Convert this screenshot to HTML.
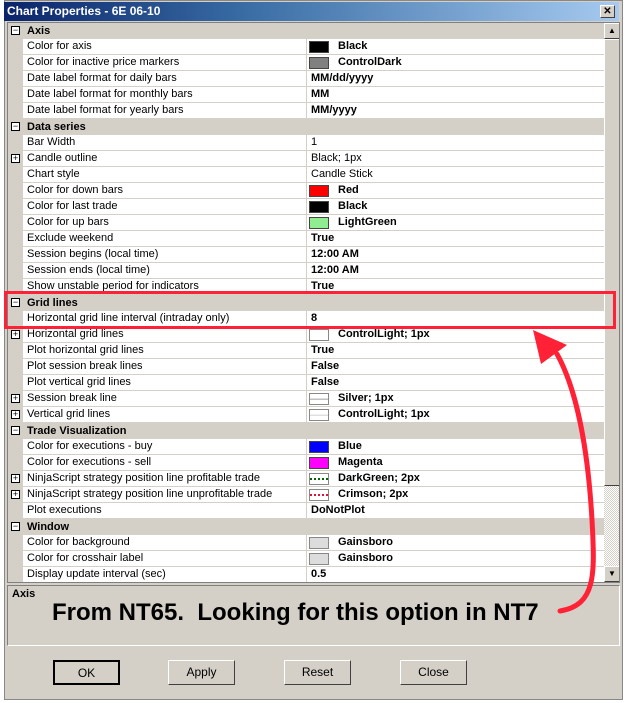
<!DOCTYPE html>
<html><head><meta charset="utf-8"><style>
*{margin:0;padding:0;box-sizing:border-box}
body{width:627px;height:703px;overflow:hidden;background:#fff;font-family:"Liberation Sans",Arial,sans-serif;font-size:11px;color:#000;position:relative}
.win{position:absolute;left:4px;top:0;width:619px;height:700px;background:#d4d0c8;border:1px solid #888}
.title{position:absolute;left:4px;top:2px;width:615px;height:19px;background:linear-gradient(90deg,#0a246a,#3a6ea5 40%,#a6caf0);color:#fff;font-weight:bold;font-size:12px;line-height:19px;padding-left:3px}
.xb{position:absolute;right:4px;top:3px;width:15px;height:13px;background:#d4d0c8;border:1px solid;border-color:#fff #404040 #404040 #fff;font-size:10px;line-height:11px;text-align:center;color:#000}
.grid{position:absolute;left:7px;top:22px;width:613px;height:561px;border:1px solid #808080;background:#d4d0c8;overflow:hidden}
.r{position:absolute;left:0;height:16px;width:596px}
.r .n{position:absolute;left:15px;width:283px;height:15px;background:#fff;padding-left:4px;line-height:15px;white-space:nowrap;overflow:hidden}
.r .v{position:absolute;left:299px;width:297px;height:15px;background:#fff;padding-left:4px;line-height:15px;white-space:nowrap}
.r .ln{position:absolute;left:15px;top:15px;width:581px;height:1px;background:#d4d0c8}
.h{position:absolute;left:0;height:16px;width:596px;background:#d4d0c8;font-weight:bold;line-height:16px;padding-left:19px}
.pm{position:absolute;left:3px;top:3px;width:9px;height:9px;border:1px solid #000;background:#fff;font-size:9px;line-height:7px;text-align:center;font-weight:normal}
b{font-weight:bold}
.sw{position:absolute;left:2px;top:2px;width:20px;height:12px;border:1px solid #444}
.sv{position:absolute;left:31px;top:0;line-height:15px}
.sb{position:absolute;left:596px;top:0;width:16px;height:559px;background:repeating-conic-gradient(#d4d0c8 0 25%,#fff 0 50%) 0 0/2px 2px}
.btn3{position:absolute;background:#d4d0c8;border:1px solid;border-color:#fff #404040 #404040 #fff}
.desc{position:absolute;left:7px;top:585px;width:613px;height:61px;border:1px solid #808080;border-right-color:#fff;border-bottom-color:#fff}
.b{position:absolute;top:660px;width:67px;height:25px;border:1px solid;border-color:#fff #404040 #404040 #fff;background:#d4d0c8;text-align:center;line-height:23px;font-size:12px}
</style></head><body>
<div class="win"></div>
<div class="title">Chart Properties - 6E 06-10<div class="xb">✕</div></div>
<div class="grid">
<div class="h" style="top:0"><span class="pm">−</span>Axis</div>
<div class="r" style="top:16px"><div class="n">Color for axis</div><div class="v"><span class="sw" style="background:#000"></span><b class="sv">Black</b></div><div class="ln"></div></div>
<div class="r" style="top:32px"><div class="n">Color for inactive price markers</div><div class="v"><span class="sw" style="background:#808080"></span><b class="sv">ControlDark</b></div><div class="ln"></div></div>
<div class="r" style="top:48px"><div class="n">Date label format for daily bars</div><div class="v"><b>MM/dd/yyyy</b></div><div class="ln"></div></div>
<div class="r" style="top:64px"><div class="n">Date label format for monthly bars</div><div class="v"><b>MM</b></div><div class="ln"></div></div>
<div class="r" style="top:80px"><div class="n">Date label format for yearly bars</div><div class="v"><b>MM/yyyy</b></div><div class="ln"></div></div>
<div class="h" style="top:96px"><span class="pm">−</span>Data series</div>
<div class="r" style="top:112px"><div class="n">Bar Width</div><div class="v">1</div><div class="ln"></div></div>
<div class="r" style="top:128px"><span class="pm">+</span><div class="n">Candle outline</div><div class="v">Black; 1px</div><div class="ln"></div></div>
<div class="r" style="top:144px"><div class="n">Chart style</div><div class="v">Candle Stick</div><div class="ln"></div></div>
<div class="r" style="top:160px"><div class="n">Color for down bars</div><div class="v"><span class="sw" style="background:#f00"></span><b class="sv">Red</b></div><div class="ln"></div></div>
<div class="r" style="top:176px"><div class="n">Color for last trade</div><div class="v"><span class="sw" style="background:#000"></span><b class="sv">Black</b></div><div class="ln"></div></div>
<div class="r" style="top:192px"><div class="n">Color for up bars</div><div class="v"><span class="sw" style="background:#90ee90"></span><b class="sv">LightGreen</b></div><div class="ln"></div></div>
<div class="r" style="top:208px"><div class="n">Exclude weekend</div><div class="v"><b>True</b></div><div class="ln"></div></div>
<div class="r" style="top:224px"><div class="n">Session begins (local time)</div><div class="v"><b>12:00 AM</b></div><div class="ln"></div></div>
<div class="r" style="top:240px"><div class="n">Session ends (local time)</div><div class="v"><b>12:00 AM</b></div><div class="ln"></div></div>
<div class="r" style="top:256px"><div class="n">Show unstable period for indicators</div><div class="v"><b>True</b></div><div class="ln"></div></div>
<div class="h" style="top:272px"><span class="pm">−</span>Grid lines</div>
<div class="r" style="top:288px"><div class="n">Horizontal grid line interval (intraday only)</div><div class="v"><b>8</b></div><div class="ln"></div></div>
<div class="r" style="top:304px"><span class="pm">+</span><div class="n">Horizontal grid lines</div><div class="v"><span class="sw" style="background:#fff;border-color:#888"></span><b class="sv">ControlLight; 1px</b></div><div class="ln"></div></div>
<div class="r" style="top:320px"><div class="n">Plot horizontal grid lines</div><div class="v"><b>True</b></div><div class="ln"></div></div>
<div class="r" style="top:336px"><div class="n">Plot session break lines</div><div class="v"><b>False</b></div><div class="ln"></div></div>
<div class="r" style="top:352px"><div class="n">Plot vertical grid lines</div><div class="v"><b>False</b></div><div class="ln"></div></div>
<div class="r" style="top:368px"><span class="pm">+</span><div class="n">Session break line</div><div class="v"><span class="sw" style="background:linear-gradient(#fff 45%,#c0c0c0 45% 60%,#fff 60%);border-color:#888"></span><b class="sv">Silver; 1px</b></div><div class="ln"></div></div>
<div class="r" style="top:384px"><span class="pm">+</span><div class="n">Vertical grid lines</div><div class="v"><span class="sw" style="background:linear-gradient(#fff 45%,#e0e0e0 45% 60%,#fff 60%);border-color:#888"></span><b class="sv">ControlLight; 1px</b></div><div class="ln"></div></div>
<div class="h" style="top:400px"><span class="pm">−</span>Trade Visualization</div>
<div class="r" style="top:416px"><div class="n">Color for executions - buy</div><div class="v"><span class="sw" style="background:#00f"></span><b class="sv">Blue</b></div><div class="ln"></div></div>
<div class="r" style="top:432px"><div class="n">Color for executions - sell</div><div class="v"><span class="sw" style="background:#f0f"></span><b class="sv">Magenta</b></div><div class="ln"></div></div>
<div class="r" style="top:448px"><span class="pm">+</span><div class="n">NinjaScript strategy position line profitable trade</div><div class="v"><span class="sw" style="background:linear-gradient(#fff 40%,transparent 40% 60%,#fff 60%),repeating-linear-gradient(90deg,#006400 0 2px,#fff 2px 4px);border-color:#888"></span><b class="sv">DarkGreen; 2px</b></div><div class="ln"></div></div>
<div class="r" style="top:464px"><span class="pm">+</span><div class="n">NinjaScript strategy position line unprofitable trade</div><div class="v"><span class="sw" style="background:linear-gradient(#fff 40%,transparent 40% 60%,#fff 60%),repeating-linear-gradient(90deg,#dc143c 0 2px,#fff 2px 4px);border-color:#888"></span><b class="sv">Crimson; 2px</b></div><div class="ln"></div></div>
<div class="r" style="top:480px"><div class="n">Plot executions</div><div class="v"><b>DoNotPlot</b></div><div class="ln"></div></div>
<div class="h" style="top:496px"><span class="pm">−</span>Window</div>
<div class="r" style="top:512px"><div class="n">Color for background</div><div class="v"><span class="sw" style="background:#dcdcdc;border-color:#888"></span><b class="sv">Gainsboro</b></div><div class="ln"></div></div>
<div class="r" style="top:528px"><div class="n">Color for crosshair label</div><div class="v"><span class="sw" style="background:#dcdcdc;border-color:#888"></span><b class="sv">Gainsboro</b></div><div class="ln"></div></div>
<div class="r" style="top:544px"><div class="n">Display update interval (sec)</div><div class="v"><b>0.5</b></div><div class="ln"></div></div>
<div class="sb">
<div class="btn3" style="left:0;top:0;width:16px;height:16px;font-size:8px;text-align:center;line-height:14px">▲</div>
<div class="btn3" style="left:0;top:16px;width:16px;height:447px"></div>
<div class="btn3" style="left:0;top:543px;width:16px;height:16px;font-size:8px;text-align:center;line-height:14px">▼</div>
</div>
</div>
<div class="desc">
<div style="position:absolute;left:4px;top:2px;font-weight:bold;font-size:11px">Axis</div>
<div style="position:absolute;left:44px;top:13px;font-weight:bold;font-size:24px;white-space:nowrap">From NT65.&nbsp; Looking for this option in NT7</div>
</div>
<div class="b" style="left:53px;border:2px solid #000;">OK</div>
<div class="b" style="left:168px">Apply</div>
<div class="b" style="left:284px">Reset</div>
<div class="b" style="left:400px">Close</div>
<svg style="position:absolute;left:0;top:0" width="627" height="703">
<rect x="5.5" y="292.5" width="609" height="35" fill="none" stroke="#ff2237" stroke-width="3"/>
<path d="M557 354 C577 390 588 450 592 520 C595 575 596 605 560 611" fill="none" stroke="#ff2237" stroke-width="5" stroke-linecap="round"/>
<polygon points="533,330 567,345 541,364" fill="#ff2237"/>
</svg>
</body></html>
